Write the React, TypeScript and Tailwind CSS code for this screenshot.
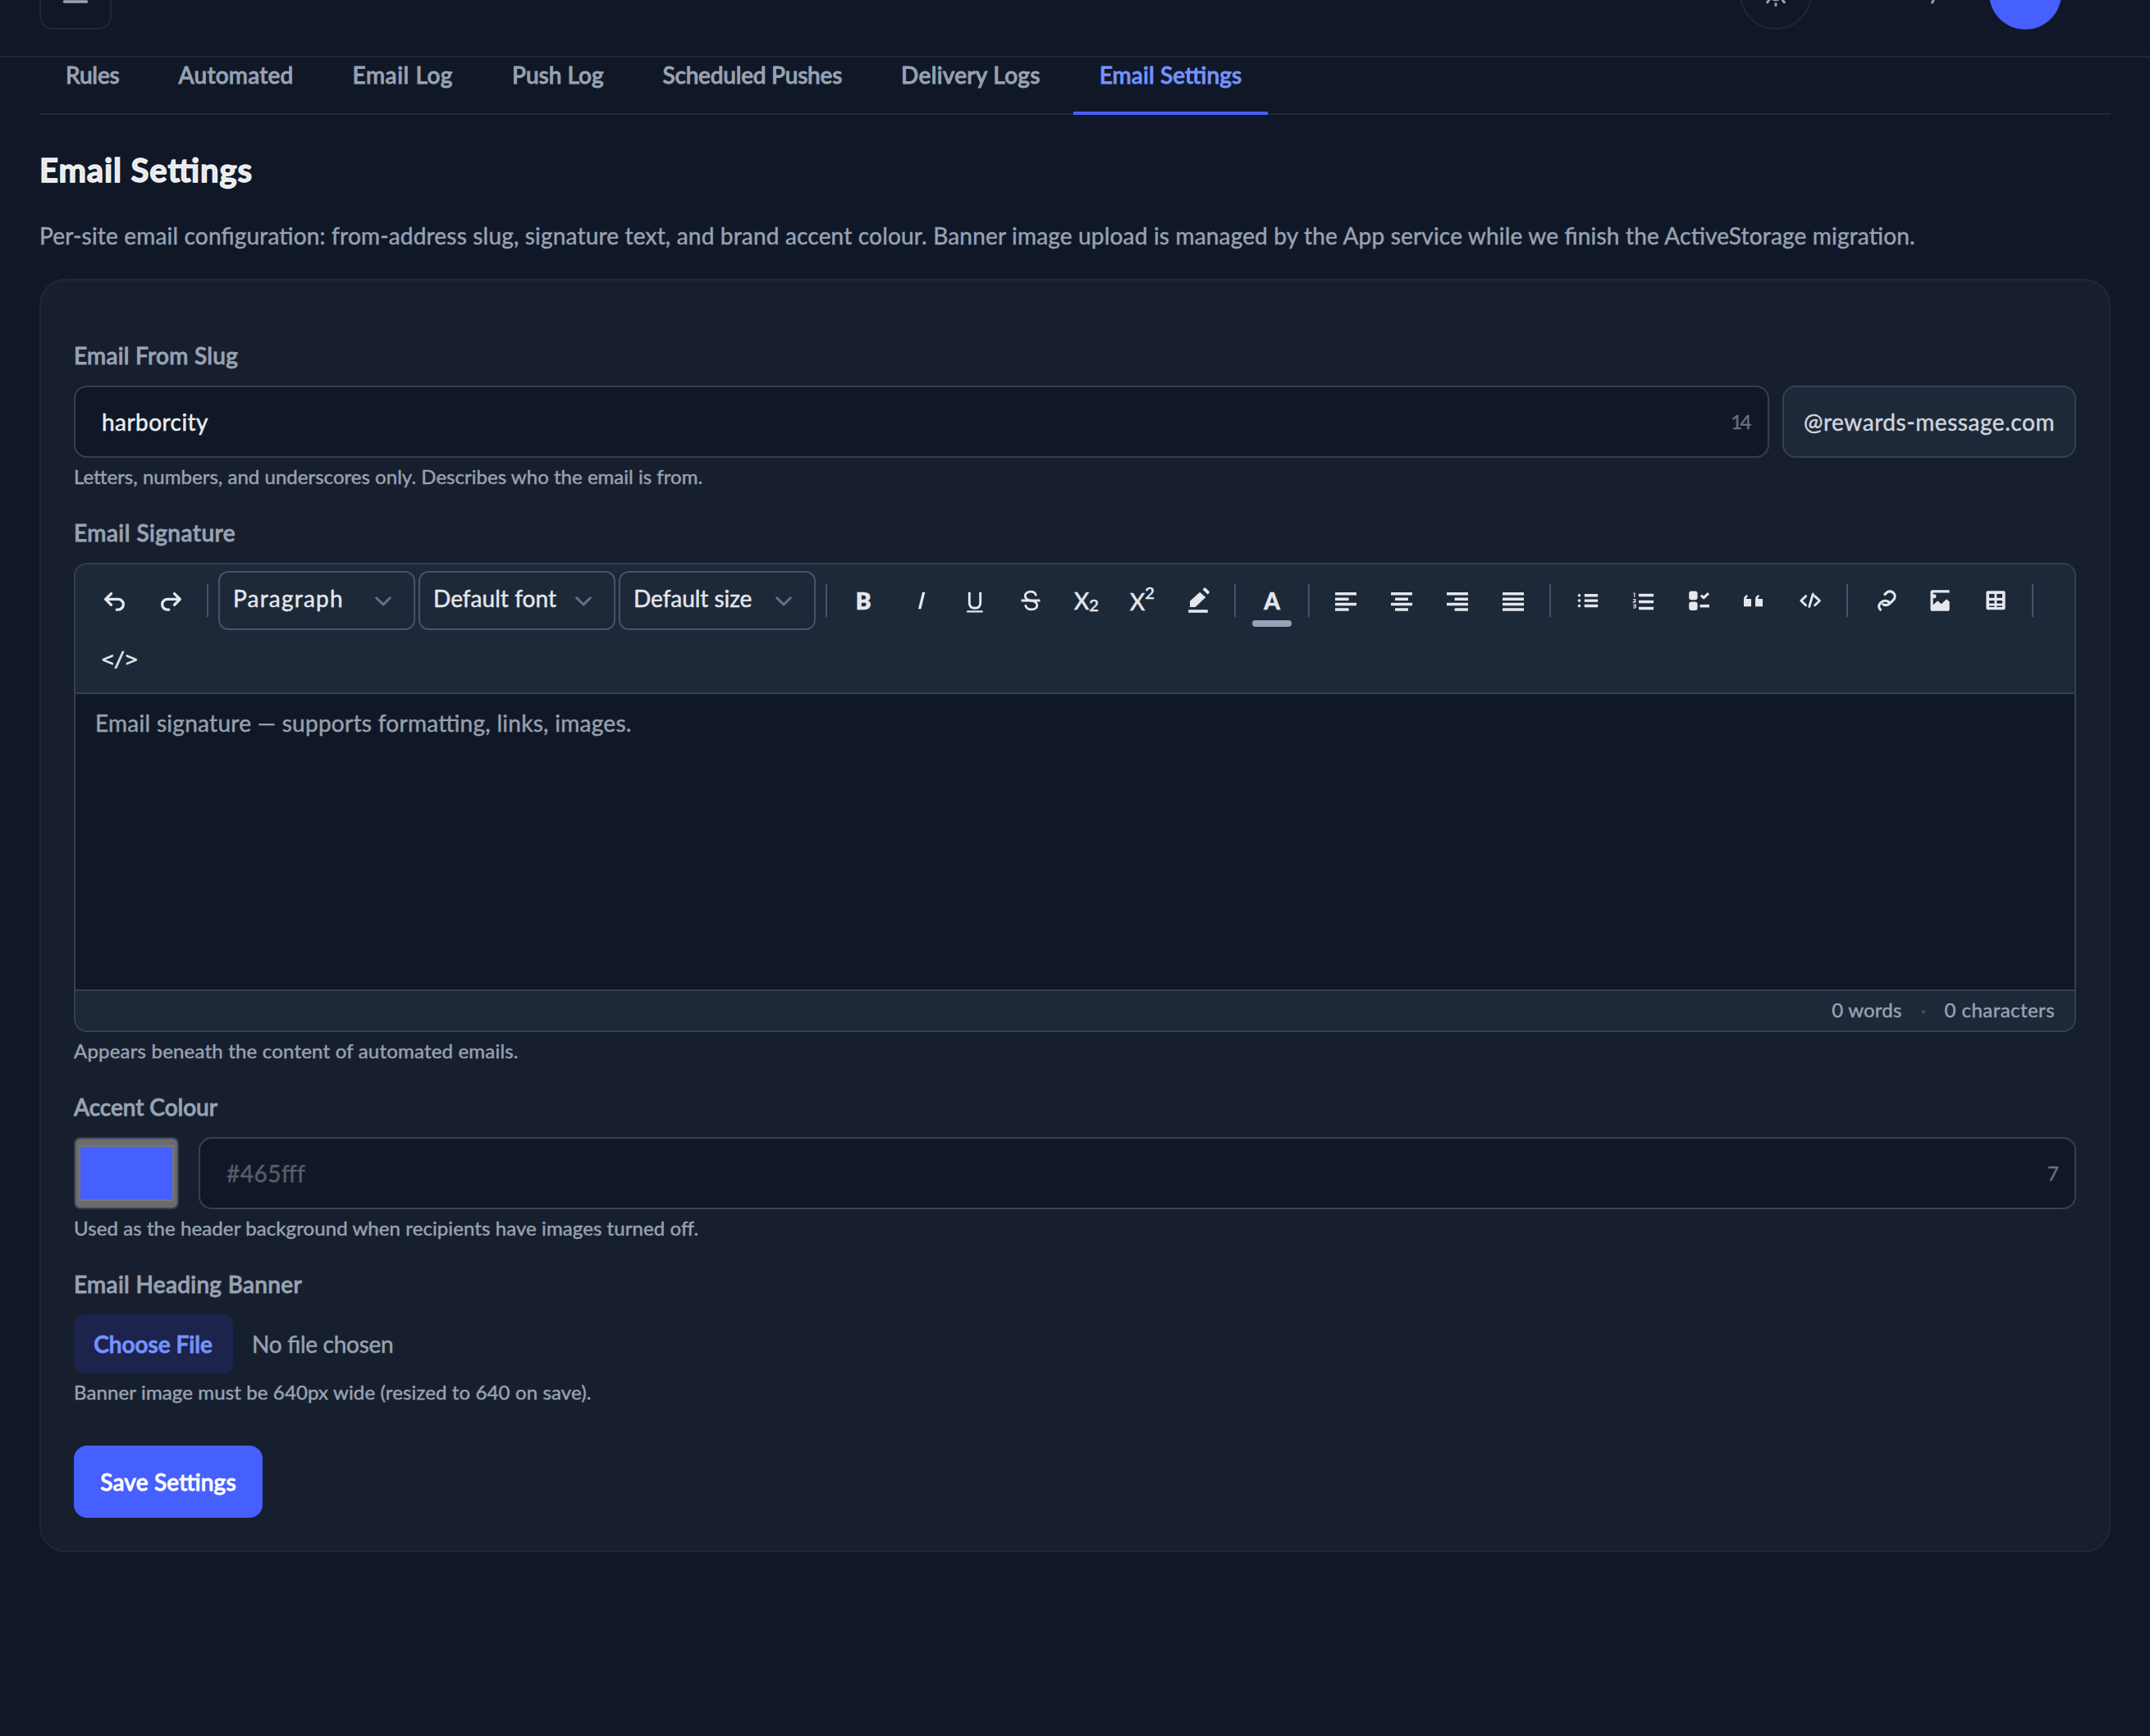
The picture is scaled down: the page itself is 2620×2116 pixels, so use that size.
import { useState } from 'react';
import type { ReactNode } from 'react';

const tabs = [
  { id: 'rules', label: 'Rules', spacing: 'tracking-[-0.18px]' },
  { id: 'automated', label: 'Automated', spacing: 'tracking-[0.23px]' },
  { id: 'email-log', label: 'Email Log', spacing: 'tracking-[0.56px]' },
  { id: 'push-log', label: 'Push Log', spacing: 'tracking-[0.02px]' },
  { id: 'scheduled', label: 'Scheduled Pushes', spacing: 'tracking-[-0.22px]' },
  { id: 'delivery', label: 'Delivery Logs', spacing: 'tracking-[0.3px]' },
  { id: 'email-settings', label: 'Email Settings', spacing: 'tracking-[0.13px]' },
];

const selects = [
  { label: 'Paragraph', spacing: 'tracking-[1.2px]' },
  { label: 'Default font', spacing: 'tracking-[0.04px]' },
  { label: 'Default size', spacing: 'tracking-[-0.05px]' },
];

const ToolButton = ({ children, wide = false }: { children: ReactNode; wide?: boolean }) => (
  <button
    type="button"
    className={`flex h-[72px] shrink-0 items-center justify-center leading-[40px] text-[#e4e7ec] ${wide ? 'w-[70px]' : 'w-[68px]'}`}
  >
    {children}
  </button>
);

const Icon = ({ children }: { children: ReactNode }) => (
  <svg className="size-10" viewBox="0 0 40 40" fill="currentColor">
    {children}
  </svg>
);

const StrokeIcon = ({ children, width = 3 }: { children: ReactNode; width?: number }) => (
  <svg
    className="size-10"
    viewBox="0 0 40 40"
    fill="none"
    stroke="currentColor"
    strokeWidth={width}
    strokeLinecap="round"
    strokeLinejoin="round"
  >
    {children}
  </svg>
);

const Divider = ({ className = 'mx-[10px]' }: { className?: string }) => (
  <span className={`h-10 w-0.5 shrink-0 bg-[#475467] ${className}`} />
);

const LineIcon = ({ lines }: { lines: [number, number][] }) => (
  <Icon>
    {lines.map(([x1, x2], i) => (
      <rect key={i} x={x1} y={10 + i * 6.4} width={x2 - x1} height={3.5} rx={0.5} />
    ))}
  </Icon>
);

const Label = ({ children, className }: { children: ReactNode; className: string }) => (
  <label className={`-mt-px mb-[17px] block text-[28px] leading-[40px] font-medium text-[#98a2b3] [-webkit-text-stroke:0.9px] ${className}`}>
    {children}
  </label>
);

const Help = ({ children, className }: { children: ReactNode; className: string }) => (
  <p className={`mt-[5px] -mb-px text-[24px] leading-[36px] text-[#98a2b3] ${className}`}>{children}</p>
);

const Header = () => (
  <header className="flex h-[70px] items-end overflow-hidden border-b-2 border-[#1d2939] pr-[108px] pb-8 pl-12">
    <button type="button" className="flex size-[88px] shrink-0 items-center justify-center rounded-2xl border-2 border-[#1d2939] text-[#98a2b3]">
      <StrokeIcon width={3.4}>
        <path d="M6.5 10h27M6.5 20h27M6.5 30h27" />
      </StrokeIcon>
    </button>
    <button type="button" className="ml-auto flex size-[88px] shrink-0 items-center justify-center rounded-full border-2 border-[#1d2939] text-[#98a2b3]">
      <StrokeIcon>
        <circle cx="20" cy="20" r="7.8" />
        <path d="M20 5.5v2M20 32.5v2M5.5 20h2M32.5 20h2M9.7 9.7l1.6 1.6M28.4 28.4l1.9 2.4M9.7 30.8l1.9-2.4M28.7 11.3l1.6-1.6" />
      </StrokeIcon>
    </button>
    <div className="flex h-[88px] w-[156px] shrink-0 items-center justify-end pb-[8px] text-[28px] leading-[40px] font-medium text-[#98a2b3]">
      Harbor City
    </div>
    <div className="ml-[60px] size-[88px] shrink-0 rounded-full bg-[#465fff]" />
  </header>
);

const Toolbar = () => (
  <div className="border-b-2 border-[#344054] bg-[#1d2939] pt-2 pb-1 pl-3">
    <div className="flex items-center">
      <ToolButton wide>
        <StrokeIcon width={3.3}>
          <path d="M16.5 11.6 9.6 18.4l6.9 6.8M10 18.4h15a6.3 6.3 0 0 1 0 12.7h-1.8" />
        </StrokeIcon>
      </ToolButton>
      <ToolButton wide>
        <StrokeIcon width={3.3}>
          <path d="m23.5 11.6 6.9 6.8-6.9 6.8M30 18.4H15a6.3 6.3 0 0 0 0 12.7h1.8" />
        </StrokeIcon>
      </ToolButton>
      <Divider className="mr-3 ml-2" />
      <div className="flex gap-1">
        {selects.map(select => (
          <button
            key={select.label}
            type="button"
            className="flex h-[72px] w-[240px] items-center justify-between rounded-xl border-2 border-[#475467] pr-[27px] pl-4 text-[28px] leading-[40px] text-[#e4e7ec]"
          >
            <span className={`pb-[6px] ${select.spacing}`}>{select.label}</span>
            <svg className="mt-[2px] h-3 w-5" viewBox="0 0 20 12" fill="none" stroke="#667085" strokeWidth="3" strokeLinecap="round" strokeLinejoin="round">
              <path d="m1.7 1.8 8.3 8.2 8.3-8.2" />
            </svg>
          </button>
        ))}
      </div>
      <Divider className="mr-[10px] ml-3" />
      <ToolButton>
        <span className="text-[28px] font-extrabold">B</span>
      </ToolButton>
      <ToolButton>
        <Icon>
          <path d="M24 9.7h3.4L22.4 30.3H19z" />
        </Icon>
      </ToolButton>
      <ToolButton>
        <svg className="size-10" viewBox="0 0 40 40" fill="none" stroke="currentColor" strokeWidth="2.9">
          <path d="M13.3 9.8v12.4c0 4.4 2.4 7 6.7 7s6.7-2.6 6.7-7V9.8" />
          <path d="M10.2 33.3h19.4" strokeWidth="2.2" />
        </svg>
      </ToolButton>
      <ToolButton>
        <StrokeIcon width={2.8}>
          <path d="M26.3 13.2c-1-2.7-3.3-4-6.2-4-4 0-6.8 2.2-6.8 5.3 0 3 2.2 4.4 6 5.5M20.5 20c4.6.9 7.3 2.5 7.3 5.7 0 3.2-2.8 5.1-6.8 5.1-3.6 0-6.3-1.6-7.2-4.5" />
          <path d="M8.5 20h23" strokeLinecap="butt" />
        </StrokeIcon>
      </ToolButton>
      <ToolButton>
        <span className="text-[28px] [-webkit-text-stroke:0.6px]">
          X<span className="align-[-2px] text-[20px] leading-none">2</span>
        </span>
      </ToolButton>
      <ToolButton>
        <span className="text-[28px] [-webkit-text-stroke:0.6px]">
          X<span className="align-[14px] text-[20px] leading-none">2</span>
        </span>
      </ToolButton>
      <ToolButton>
        <Icon>
          <path d="M10 20.7 22.1 9.7l7.2 6.3L16.6 28H10z" />
          <path d="m25.5 6.6 1.8-1.9c.6-.6 1.4-.6 2 0l4 4c.7.7.7 1.5 0 2.2l-1.7 1.7z" />
          <rect x="8.2" y="31.2" width="23.6" height="3.6" />
        </Icon>
      </ToolButton>
      <Divider />
      <ToolButton>
        <span className="relative text-[28px] font-black">
          A
          <span className="absolute top-[44px] left-1/2 h-2 w-12 -translate-x-1/2 rounded-full bg-[#94a3b8]" />
        </span>
      </ToolButton>
      <Divider />
      <ToolButton>
        <LineIcon lines={[[7, 33], [7, 23.6], [7, 33], [7, 23.6]]} />
      </ToolButton>
      <ToolButton>
        <LineIcon lines={[[7, 33], [12, 28], [7, 33], [12, 28]]} />
      </ToolButton>
      <ToolButton>
        <LineIcon lines={[[7, 33], [16.6, 33], [7, 33], [16.6, 33]]} />
      </ToolButton>
      <ToolButton>
        <LineIcon lines={[[7, 33], [7, 33], [7, 33], [7, 33]]} />
      </ToolButton>
      <Divider />
      <ToolButton>
        <Icon>
          {[13.7, 20.1, 26.5].map(y => (
            <g key={y}>
              <circle cx="10.5" cy={y} r="1.8" />
              <rect x="16.8" y={y - 1.7} width="16.4" height="3.4" rx="0.4" />
            </g>
          ))}
        </Icon>
      </ToolButton>
      <ToolButton>
        <Icon>
          {[13.5, 21.5, 29.5].map(y => (
            <rect key={y} x="15" y={y - 1.7} width="18" height="3.4" rx="0.4" />
          ))}
          <g fill="none" stroke="currentColor" strokeWidth="1.2">
            <path d="M8.5 11.2h1.3v4.6M8.2 18.6h2.6v1.6l-2.2 1.6h2.9M8.3 25h2.8v4M8.3 27h2.6M8.2 29h2.9" />
          </g>
        </Icon>
      </ToolButton>
      <ToolButton>
        <Icon>
          <rect x="8.2" y="8.6" width="10.4" height="10.6" rx="3" />
          <rect x="8.2" y="21.4" width="10.4" height="10.6" rx="3" />
          <rect x="21.5" y="24.9" width="11.5" height="3.5" />
          <path d="m22.8 13.6 3.4 3 5.8-5.4" fill="none" stroke="currentColor" strokeWidth="3.2" />
        </Icon>
      </ToolButton>
      <ToolButton>
        <Icon>
          <path d="M16 18v9.2H7V19c0-3.4 1.5-5.3 4.3-6l.5 1.9c-1 .7-1.6 1.7-1.6 3.1z" />
          <path d="M30 18v9.2h-9V19c0-3.4 1.5-5.3 4.3-6l.5 1.9c-1 .7-1.6 1.7-1.6 3.1z" />
        </Icon>
      </ToolButton>
      <ToolButton>
        <StrokeIcon width={2.9}>
          <path d="m14.6 14.6-5.8 5.6 5.8 5.6M25.6 14.6l5.8 5.6-5.8 5.6M23.3 12l-4.5 15.4" />
        </StrokeIcon>
      </ToolButton>
      <Divider />
      <ToolButton>
        <svg className="size-10" viewBox="0 0 40 40" fill="none" stroke="currentColor" strokeWidth="3.1">
          <path d="m20 13.4 2.6-2.6c2.5-2.5 6.3-2.5 8.7-.1 2.5 2.5 2.4 6.1 0 8.6l-4.4 4.4c-2.6 2.6-6.6 2.5-9.1.1" />
          <path d="M26.4 22.4c-2.6-2.7-6.8-3-9.6-.5-4.3 3.4-4 6.7-.4 10.2" />
        </svg>
      </ToolButton>
      <ToolButton>
        <Icon>
          <path d="M31.6 7.3v3.3H11.7v14.6l5.7-5 4.3 4 6.4-6 3.6 3.2v9c0 1.4-.9 2.3-2.3 2.3H10.8c-1.4 0-2.3-.9-2.3-2.3V9.6c0-1.4.9-2.3 2.3-2.3z" />
          <circle cx="13" cy="14.7" r="2.5" />
        </Icon>
      </ToolButton>
      <ToolButton>
        <Icon>
          <path
            fillRule="evenodd"
            d="M10.4 8.3h19.2c1.2 0 2 .8 2 2v19c0 1.2-.8 2-2 2H10.4c-1.2 0-2-.8-2-2v-19c0-1.2.8-2 2-2zM12 12v4.7h6.5V12zm9.3 0v4.7H28V12zM12 20v3.6h6.5V20zm9.3 0v3.6H28V20zM12 26.6V28h6.5v-1.4zm9.3 0V28H28v-1.4z"
          />
        </Icon>
      </ToolButton>
      <Divider />
    </div>
    <button type="button" className="flex h-[72px] items-center pl-5 font-['DejaVu_Sans_Mono',monospace] text-[24px] leading-[36px] text-[#e4e7ec]">
      {'</>'}
    </button>
  </div>
);

const App = () => {
  const [activeTab, setActiveTab] = useState('email-settings');
  const [slug, setSlug] = useState('harborcity');
  const [colour, setColour] = useState('');

  return (
    <div className="min-h-[2116px] w-[2620px] bg-[#101828] font-[Lato,sans-serif] [-webkit-text-stroke:0.45px] [font-feature-settings:'liga']">
      <Header />

      <main className="px-12">
        <nav className="flex gap-2 border-b-2 border-[#1d2939]">
          {tabs.map(tab => (
            <button
              key={tab.id}
              type="button"
              onClick={() => setActiveTab(tab.id)}
              className={`-mb-0.5 border-b-4 px-8 pt-px pb-[25px] text-[28px] leading-[40px] font-medium whitespace-nowrap [-webkit-text-stroke:0.9px] ${tab.spacing} ${
                activeTab === tab.id ? 'border-[#465fff] text-[#7592ff]' : 'border-transparent text-[#98a2b3]'
              }`}
            >
              {tab.label}
            </button>
          ))}
        </nav>

        <h1 className="mt-[37px] text-[40px] leading-[60px] font-bold tracking-[0.9px] text-white/90 [-webkit-text-stroke:1.3px]">
          Email Settings
        </h1>
        <p className="mt-[30px] text-[28px] leading-[40px] tracking-[0.18px] whitespace-nowrap text-[#98a2b3]">
          Per-site email configuration: from-address slug, signature text, and brand accent colour. Banner image upload is
          managed by the App service while we finish the ActiveStorage migration.
        </p>

        <section className="mt-[33px] rounded-[32px] border-2 border-[#1d2939] bg-white/[0.03] px-10 pt-[72px] pb-10">
          {/* From address */}
          <Label className="tracking-[0.27px]">Email From Slug</Label>
          <div className="flex gap-4">
            <div className="flex h-[88px] flex-1 items-center rounded-2xl border-2 border-[#344054] bg-[#101828] pr-[22px] pb-px pl-8">
              <input
                value={slug}
                onChange={e => setSlug(e.target.value)}
                className="min-w-0 flex-1 bg-transparent text-[28px] tracking-[0.45px] text-white/90 outline-none"
              />
              <span className="text-[24px] tracking-[-2.5px] text-[#667085]">14</span>
            </div>
            <div className="flex h-[88px] items-center rounded-2xl border-2 border-[#344054] bg-[#1d2939] px-6 pb-px text-[28px] leading-[40px] tracking-[0.55px] text-[#d0d5dd]">
              @rewards-message.com
            </div>
          </div>
          <Help className="tracking-[0.03px]">Letters, numbers, and underscores only. Describes who the email is from.</Help>

          {/* Signature editor */}
          <div className="pt-8">
            <Label className="tracking-[0.48px]">Email Signature</Label>
            <div className="overflow-hidden rounded-2xl border-2 border-[#344054]">
              <Toolbar />
              <div className="h-[360px] bg-[#101828] px-6 pt-[15px] text-[28px] leading-[40px] tracking-[0.28px] text-[#98a0ac]">
                Email signature — supports formatting, links, images.
              </div>
              <div className="flex h-[50px] items-center justify-end border-t-2 border-[#344054] bg-[#1d2939] pr-6 pb-[2px] pl-6 text-[24px] leading-[36px] text-[#98a2b3]">
                <span className="tracking-[0.2px]">0 words</span>
                <span className="w-[52px] text-center text-[#475467]">·</span>
                <span className="tracking-[0.45px]">0 characters</span>
              </div>
            </div>
            <Help className="tracking-[0.2px]">Appears beneath the content of automated emails.</Help>
          </div>

          {/* Accent colour */}
          <div className="pt-8">
            <Label className="tracking-[-0.03px]">Accent Colour</Label>
            <div className="flex gap-6">
              <button type="button" className="h-[88px] w-32 rounded-lg border-2 border-[#344054] bg-[#6b6b6b] px-1 py-2">
                <span className="block size-full border-2 border-[#777777] bg-[#465fff]" />
              </button>
              <div className="flex h-[88px] flex-1 items-center rounded-2xl border-2 border-[#344054] bg-[#101828] pr-[19px] pb-px pl-8">
                <input
                  value={colour}
                  onChange={e => setColour(e.target.value)}
                  placeholder="#465fff"
                  className="min-w-0 flex-1 bg-transparent text-[28px] tracking-[0.5px] text-white/90 outline-none placeholder:text-[#585d69]"
                />
                <span className="text-[24px] text-[#667085]">7</span>
              </div>
            </div>
            <Help className="tracking-[0.09px]">Used as the header background when recipients have images turned off.</Help>
          </div>

          {/* Banner upload */}
          <div className="pt-8">
            <Label className="tracking-[0.32px]">Email Heading Banner</Label>
            <div className="flex items-center gap-[23px] text-[28px] leading-[40px]">
              <button type="button" className="h-[72px] w-[194px] rounded-xl bg-[#1c234c] pr-px font-semibold text-[#7592ff] [-webkit-text-stroke:0.9px]">
                Choose File
              </button>
              <span className="tracking-[-0.28px] text-[#98a2b3]">No file chosen</span>
            </div>
            <Help className="tracking-[0.13px]">Banner image must be 640px wide (resized to 640 on save).</Help>
          </div>

          <button
            type="button"
            className="mt-12 block h-[88px] w-[230px] rounded-2xl bg-[#465fff] text-[28px] leading-[40px] font-medium tracking-[0.2px] text-white [-webkit-text-stroke:0.9px]"
          >
            Save Settings
          </button>
        </section>
      </main>
    </div>
  );
};

export default App;
